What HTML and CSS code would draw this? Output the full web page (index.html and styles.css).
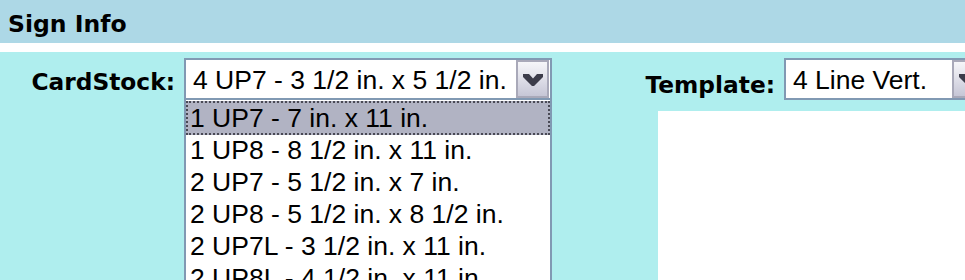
FILE: index.html
```html
<!DOCTYPE html>
<html>
<head>
<meta charset="utf-8">
<link rel="stylesheet" href="styles.css">
</head>
<body>
<div class="header">Sign Info</div>
<div class="spacer"></div>
<div class="content">
  <div class="field field-left">
    <label class="label label-card">CardStock:</label>
    <div class="select select-card">
      <span class="select-text">4 UP7 - 3 1/2 in. x 5 1/2 in.</span>
      <span class="select-btn">
        <svg width="29" height="34" viewBox="0 0 29 34"><polygon points="5,12 11,12 15,16.5 19,12 25,12 25,15 16,24 14,24 5,15" fill="#3c3c4a"/></svg>
      </span>
    </div>
    <ul class="dropdown">
      <li class="opt opt-active">1 UP7 - 7 in. x 11 in.</li>
      <li class="opt">1 UP8 - 8 1/2 in. x 11 in.</li>
      <li class="opt">2 UP7 - 5 1/2 in. x 7 in.</li>
      <li class="opt">2 UP8 - 5 1/2 in. x 8 1/2 in.</li>
      <li class="opt">2 UP7L - 3 1/2 in. x 11 in.</li>
      <li class="opt">2 UP8L - 4 1/2 in. x 11 in.</li>
    </ul>
  </div>
  <div class="right-col">
    <div class="field">
      <label class="label label-template">Template:</label>
      <div class="select select-template">
        <span class="select-text">4 Line Vert.</span>
        <span class="select-btn">
          <svg width="29" height="34" viewBox="0 0 29 34"><polygon points="5,12 11,12 15,16.5 19,12 25,12 25,15 16,24 14,24 5,15" fill="#3c3c4a"/></svg>
        </span>
      </div>
    </div>
    <div class="preview"></div>
  </div>
</div>
</body>
</html>
```

FILE: styles.css
```css
html, body {
  margin: 0;
  padding: 0;
}
body {
  width: 965px;
  height: 280px;
  overflow: hidden;
  background: #afeeee;
  color: #000;
}
.header {
  background: #add8e6;
  height: 33px;
  padding: 10px 8px 0;
  font-family: "DejaVu Sans", Verdana, sans-serif;
  font-weight: bold;
  font-size: 23.5px;
  line-height: normal;
  white-space: nowrap;
}
.spacer {
  height: 9px;
  background: #fff;
}
.content {
  display: flex;
  align-items: flex-start;
  padding-top: 6px;
}
.field {
  display: flex;
  align-items: flex-start;
}
.field-left {
  position: relative;
  width: 552px;
  flex: none;
}
.label {
  font-family: "DejaVu Sans", Verdana, sans-serif;
  font-weight: bold;
  font-size: 23.3px;
  line-height: normal;
  text-align: right;
  white-space: nowrap;
  margin-right: 9px;
  flex: none;
}
.label-card {
  width: 175px;
  margin-top: 10px;
}
.label-template {
  width: 223px;
  margin-top: 13px;
}
.select {
  box-sizing: border-box;
  height: 42px;
  border: 2px solid #8199b3;
  background: #fff;
  display: flex;
  flex: none;
}
.select-card {
  width: 368px;
}
.select-template {
  width: 204px;
}
.select-text {
  flex: 1;
  font-family: "Liberation Sans", Arial, sans-serif;
  font-size: 26.5px;
  line-height: 38px;
  padding: 1px 0 0 7px;
  white-space: nowrap;
  overflow: hidden;
}
.select-btn {
  box-sizing: border-box;
  width: 33px;
  height: 38px;
  margin-right: 1px;
  border: 2px solid #a9a9b9;
  background: linear-gradient(#f6f6f9, #e4e4ec 40%, #c6c6d6);
  display: flex;
  align-items: center;
  justify-content: center;
}
.select-btn svg {
  display: block;
}
.dropdown {
  position: absolute;
  top: 42px;
  left: 184px;
  width: 368px;
  box-sizing: border-box;
  margin: 0;
  padding: 2px 0 0;
  list-style: none;
  background: #fff;
  border: 2px solid #8199b3;
  border-top: 0;
  border-bottom: 0;
}
.opt {
  height: 32px;
  line-height: 32px;
  padding-left: 4px;
  font-family: "Liberation Sans", Arial, sans-serif;
  font-size: 26.5px;
  white-space: nowrap;
}
.opt-active {
  background: #b1b3c3;
  outline: 2px dotted #4a4a55;
  outline-offset: -2px;
  margin-top: -1px;
  height: 34px;
  line-height: 34px;
  margin-bottom: -1px;
}
.right-col {
  flex: none;
}
.preview {
  margin-top: 11px;
  margin-left: 106px;
  width: 400px;
  height: 200px;
  background: #fff;
}
```
